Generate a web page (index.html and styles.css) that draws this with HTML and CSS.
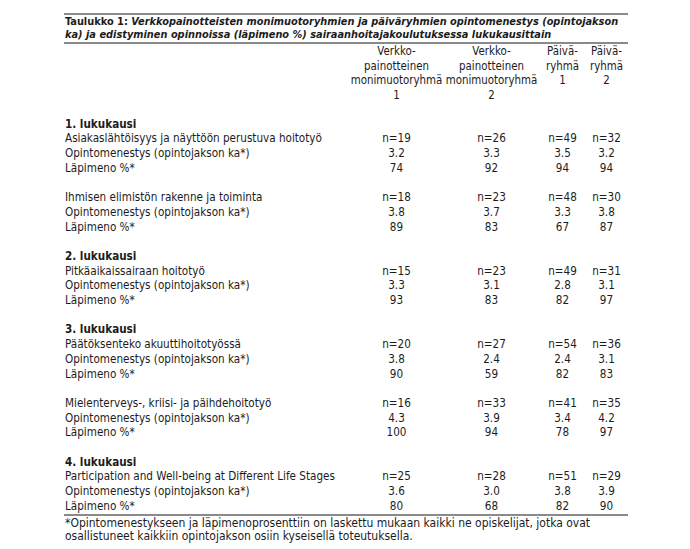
FILE: index.html
```html
<!doctype html>
<html lang="fi">

<head>
    <meta charset="UTF-8">
    <title>Taulukko 1</title>
    <link rel="stylesheet" href="styles.css">
</head>

<body>
    <div class="wrap">
        <div class="caption">
            <b>Taulukko 1:</b> <i>Verkkopainotteisten monimuotoryhmien ja päiväryhmien opintomenestys (opintojakson<br>
                ka) ja edistyminen opinnoissa (läpimeno %) sairaanhoitajakoulutuksessa lukukausittain</i>
        </div>

        <table class="data">
            <colgroup>
                <col class="c-label">
                <col class="c-verkko1">
                <col class="c-verkko2">
                <col class="c-paiva1">
                <col class="c-paiva2">
            </colgroup>
            <thead>
                <tr>
                    <th></th>
                    <th>Verkko-<br>painotteinen<br>monimuotoryhmä<br>1</th>
                    <th>Verkko-<br>painotteinen<br>monimuotoryhmä<br>2</th>
                    <th>Päivä-<br>ryhmä<br>1</th>
                    <th>Päivä-<br>ryhmä<br>2</th>
                </tr>
            </thead>
            <tbody>
                <tr class="gap"><td colspan="5"></td></tr>
                <tr><td class="term" colspan="5">1. lukukausi</td></tr>
                <tr><td>Asiakaslähtöisyys ja näyttöön perustuva hoitotyö</td><td>n=19</td><td>n=26</td><td>n=49</td><td>n=32</td></tr>
                <tr><td>Opintomenestys (opintojakson ka*)</td><td>3.2</td><td>3.3</td><td>3.5</td><td>3.2</td></tr>
                <tr><td>Läpimeno %*</td><td>74</td><td>92</td><td>94</td><td>94</td></tr>
                <tr class="gap"><td colspan="5"></td></tr>
                <tr><td>Ihmisen elimistön rakenne ja toiminta</td><td>n=18</td><td>n=23</td><td>n=48</td><td>n=30</td></tr>
                <tr><td>Opintomenestys (opintojakson ka*)</td><td>3.8</td><td>3.7</td><td>3.3</td><td>3.8</td></tr>
                <tr><td>Läpimeno %*</td><td>89</td><td>83</td><td>67</td><td>87</td></tr>
                <tr class="gap"><td colspan="5"></td></tr>
                <tr><td class="term" colspan="5">2. lukukausi</td></tr>
                <tr><td>Pitkäaikaissairaan hoitotyö</td><td>n=15</td><td>n=23</td><td>n=49</td><td>n=31</td></tr>
                <tr><td>Opintomenestys (opintojakson ka*)</td><td>3.3</td><td>3.1</td><td>2.8</td><td>3.1</td></tr>
                <tr><td>Läpimeno %*</td><td>93</td><td>83</td><td>82</td><td>97</td></tr>
                <tr class="gap"><td colspan="5"></td></tr>
                <tr><td class="term" colspan="5">3. lukukausi</td></tr>
                <tr><td>Päätöksenteko akuuttihoitotyössä</td><td>n=20</td><td>n=27</td><td>n=54</td><td>n=36</td></tr>
                <tr><td>Opintomenestys (opintojakson ka*)</td><td>3.8</td><td>2.4</td><td>2.4</td><td>3.1</td></tr>
                <tr><td>Läpimeno %*</td><td>90</td><td>59</td><td>82</td><td>83</td></tr>
                <tr class="gap"><td colspan="5"></td></tr>
                <tr><td>Mielenterveys-, kriisi- ja päihdehoitotyö</td><td>n=16</td><td>n=33</td><td>n=41</td><td>n=35</td></tr>
                <tr><td>Opintomenestys (opintojakson ka*)</td><td>4.3</td><td>3.9</td><td>3.4</td><td>4.2</td></tr>
                <tr><td>Läpimeno %*</td><td>100</td><td>94</td><td>78</td><td>97</td></tr>
                <tr class="gap"><td colspan="5"></td></tr>
                <tr><td class="term" colspan="5">4. lukukausi</td></tr>
                <tr><td>Participation and Well-being at Different Life Stages</td><td>n=25</td><td>n=28</td><td>n=51</td><td>n=29</td></tr>
                <tr><td>Opintomenestys (opintojakson ka*)</td><td>3.6</td><td>3.0</td><td>3.8</td><td>3.9</td></tr>
                <tr class="last"><td>Läpimeno %*</td><td>80</td><td>68</td><td>82</td><td>90</td></tr>
            </tbody>
        </table>

        <p class="note">*Opintomenestykseen ja läpimenoprosenttiin on laskettu mukaan kaikki ne opiskelijat, jotka ovat
            osallistuneet kaikkiin opintojakson osiin kyseisellä toteutuksella.</p>
    </div>
</body>

</html>
```

FILE: styles.css
```css
* {
    margin: 0;
    padding: 0;
}

body {
    background: #fff;
    color: #1c1c1c;
    font-family: "DejaVu Sans Condensed", "DejaVu Sans", sans-serif;
    font-size: 11.6px;
    line-height: 14.7px;
}

.wrap {
    width: 564px;
    margin: 13px 0 0 64px;
}

.caption {
    border-top: 2px solid #8a8a8a;
    border-bottom: 2px solid #8a8a8a;
    padding: 1px 0 1px 1px;
    font-size: 10.9px;
    line-height: 12.5px;
    font-weight: bold;
    white-space: nowrap;
}

.caption i {
    font-style: italic;
}

.data {
    width: 100%;
    border-collapse: collapse;
    table-layout: fixed;
}

.c-label {
    width: 286px;
}

.c-verkko1 {
    width: 93px;
}

.c-verkko2 {
    width: 97px;
}

.c-paiva1 {
    width: 45px;
}

.c-paiva2 {
    width: 43px;
}

.data th {
    font-weight: normal;
    font-size: 11.4px;
    text-align: center;
    vertical-align: top;
    line-height: 14.5px;
    padding: 0;
}

.data td {
    height: 14.7px;
    padding: 0;
    text-align: center;
    white-space: nowrap;
}

.data td:first-child {
    text-align: left;
    padding-left: 1px;
}

.data td.term {
    font-weight: bold;
}

.data tr.last td {
    border-bottom: 2px solid #8a8a8a;
}

.note {
    padding: 1px 0 0 1px;
    font-size: 12px;
    line-height: 13.5px;
}
```
